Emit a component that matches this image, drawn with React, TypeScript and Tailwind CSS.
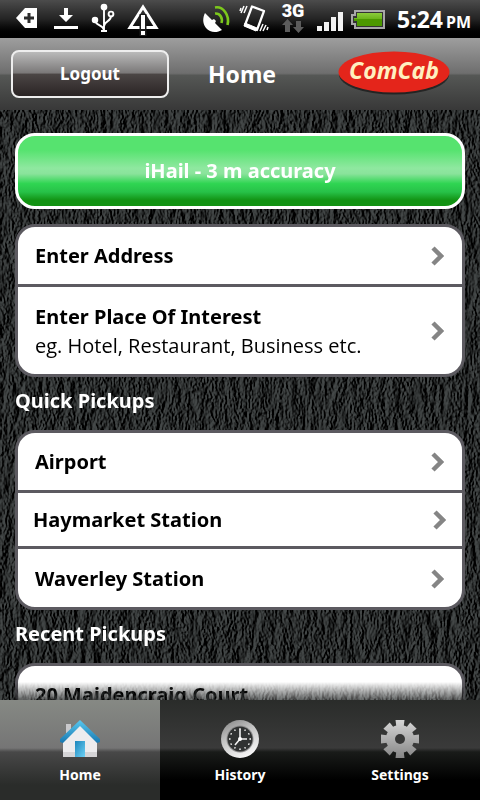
import type { ReactNode } from "react";

function StatusBar() {
  return (
    <div className="flex h-[38px] shrink-0 justify-between bg-linear-to-b from-[#4c4c4c] via-[#242424] via-50% to-black pr-[9px] pl-4 text-white">
      <div className="flex gap-3">
        <svg className="h-[38px] w-[25px]" viewBox="0 0 25 38" aria-hidden="true">
          <path d="M0 18 9 8H21V28H9Z" fill="#fff" />
          <path d="M13 13V23M8 18H18" stroke="#2c2c2c" strokeWidth="3" />
        </svg>
        <svg className="h-[38px] w-[26px]" viewBox="0 0 26 38" aria-hidden="true">
          <path d="M11 8H15V15H20L13 22 6 15H11Z" fill="#fff" />
          <path d="M1 27.5H25" stroke="#fff" strokeWidth="3" />
        </svg>
        <svg className="h-[38px] w-6" viewBox="0 0 24 38" fill="none" stroke="#fff" strokeWidth="1.9" aria-hidden="true">
          <path d="M13 7V31M4 20C4 26 12 24 13 30M20 16C20 22 14 20 13 26" />
          <circle cx="13" cy="7" r="2.4" fill="#fff" />
          <circle cx="4" cy="20" r="2.3" fill="#fff" />
          <circle cx="20" cy="14" r="2.4" />
          <path d="M10 31H16" strokeWidth="2" />
        </svg>
        <svg className="h-[38px] w-8" viewBox="0 0 32 38" aria-hidden="true">
          <path d="M16 7 29 27.5H3Z" fill="none" stroke="#fff" strokeWidth="3" />
          <path d="M16 14V36" stroke="#1b1b1b" strokeWidth="7" />
          <path d="M16 15V29M16 31V35" stroke="#fff" strokeWidth="4" />
        </svg>
      </div>
      <div className="flex gap-2">
        <svg className="h-[38px] w-[30px]" viewBox="0 0 30 38" fill="none" aria-hidden="true">
          <path d="M4 13 11 20 13 19 15 21 14 23 21 30C16 33 9 33 5 28 1 23 2 17 4 13Z" fill="#fff" />
          <path d="M14 7.500C22 6 29 15 26.500 25" stroke="#7cc81c" strokeWidth="2.600" />
          <path d="M14 13.500C19 13 22 18 20.500 23" stroke="#7cc81c" strokeWidth="2.600" />
        </svg>
        <svg className="h-[38px] w-8" viewBox="0 0 32 38" fill="none" stroke="#fff" aria-hidden="true">
          <path d="M13 6.500 25 11 18 30 6 25Z" strokeWidth="2.200" strokeLinejoin="round" />
          <path d="M6 23 18 28 17 31 5 26Z" fill="#fff" strokeWidth="1" />
          <path d="M8 6 5 13M5 6 2 13M2 8 1 11M24 24 21 31M27 25 24 31M29 27 28 30" strokeWidth="1.500" />
        </svg>
        <div className="flex w-7 flex-col items-center pt-[3px]">
          <span className="font-['Roboto'] text-[18px] leading-4 font-black">3G</span>
          <svg className="h-[14px] w-6" viewBox="0 0 24 14" fill="#5c5c5c" aria-hidden="true">
            <path d="M6.500 0 12 6H9V13H4V6H1ZM17.500 14 12 8H15V2H20V8H23Z" />
          </svg>
        </div>
        <svg className="h-[38px] w-7" viewBox="0 0 28 38" fill="#f2f2f2" aria-hidden="true">
          <path d="M2 26H7V31H2ZM9 22H14V31H9ZM16 17H21V31H16ZM23 12H28V31H23Z" />
        </svg>
        <svg className="h-[38px] w-[38px]" viewBox="0 0 38 38" aria-hidden="true">
          <defs>
            <linearGradient id="charge" x2="0" y2="1">
              <stop offset="0" stopColor="#8ccc3c" />
              <stop offset="0.45" stopColor="#6cb41c" />
              <stop offset="0.5" stopColor="#4c9800" />
              <stop offset="1" stopColor="#4c9800" />
            </linearGradient>
          </defs>
          <path d="M4 11H33V28H4V24H1V15H4Z" fill="#333" stroke="#a8a8a8" strokeWidth="2" />
          <path d="M6 13H31V26H6V21H3V18H6Z" fill="url(#charge)" />
        </svg>
        <div className="flex items-baseline gap-[3px] font-bold">
          <span className="text-[23px] leading-[38px]">5:24</span>
          <span className="text-base">PM</span>
        </div>
      </div>
    </div>
  );
}

function Logo() {
  return (
    <svg className="mr-[19px] h-12 w-[112px] justify-self-end" viewBox="0 0 112 48" role="img" aria-label="ComCab">
      <ellipse cx="56" cy="24.500" rx="55" ry="20" fill="#000" opacity="0.5" />
      <ellipse cx="56" cy="22" rx="55.500" ry="20.500" fill="#e4251b" />
      <text
        x="56"
        y="29"
        textAnchor="middle"
        fill="#fff0c0"
        fontSize="23"
        fontWeight="700"
        fontStyle="italic"
        fontFamily="Noto Sans, Open Sans, sans-serif"
      >
        ComCab
      </text>
    </svg>
  );
}

// two layers of noise: long vertical creases and a fine grain over them
function Leather() {
  return (
    <svg className="absolute inset-0 h-full w-full" aria-hidden="true">
      <filter id="leather" x="0" y="0" width="100%" height="100%" colorInterpolationFilters="sRGB">
        <feTurbulence type="turbulence" baseFrequency="0.08 0.026" numOctaves="2" seed="8" result="creases" />
        <feTurbulence type="fractalNoise" baseFrequency="0.6 0.28" numOctaves="3" seed="3" result="grain" />
        <feComposite in="creases" in2="grain" operator="arithmetic" k2="1" k3="0.5" />
        <feColorMatrix values="0 0 0 0 0  0 0 0 0 0  0 0 0 0 0  1 0 0 0 0" />
        <feDiffuseLighting surfaceScale="5" diffuseConstant="0.72" lightingColor="#606666">
          <feDistantLight azimuth="190" elevation="36" />
        </feDiffuseLighting>
      </filter>
      <rect width="100%" height="100%" filter="url(#leather)" />
    </svg>
  );
}

function PickupList({ children }: { children: ReactNode }) {
  return (
    <ul className="divide-y-3 divide-[#5c5a60] overflow-hidden rounded-[20px] border-3 border-[#5c5a60] bg-white">
      {children}
    </ul>
  );
}

const rowPadding = {
  first: "py-[14px] pr-[18px] pl-[17px]",
  middle: "py-3 pr-4 pl-[15px]",
  last: "pt-[15px] pb-[14px] pr-[18px] pl-[17px]",
};

interface PickupRowProps {
  title: string;
  detail?: string;
  place: keyof typeof rowPadding;
  chevron?: boolean;
}

function PickupRow({ title, detail, place, chevron = true }: PickupRowProps) {
  return (
    <li>
      <button className={"flex w-full items-center justify-between text-left text-black " + rowPadding[place]}>
        <span className="text-[20px] leading-[29px]">
          <span className="block font-bold">{title}</span>
          {detail && <span className="block font-['Open_Sans']">{detail}</span>}
        </span>
        {chevron && (
          <svg className="h-5 w-[14px] shrink-0" viewBox="0 0 14 20" fill="none" aria-hidden="true">
            <path d="M3 2 11 10 3 18" stroke="#858585" strokeWidth="4.500" />
          </svg>
        )}
      </button>
    </li>
  );
}

function SectionTitle({ children }: { children: ReactNode }) {
  return <h2 className="pt-[9px] pb-[15px] text-[20px] leading-[29px] font-bold text-white">{children}</h2>;
}

function HomeIcon() {
  return (
    <svg className="h-10 w-[42px]" viewBox="0 0 42 40" aria-hidden="true">
      <defs>
        <linearGradient id="roof" x2="0" y2="1">
          <stop offset="0" stopColor="#58c8f0" />
          <stop offset="1" stopColor="#1878b0" />
        </linearGradient>
        <linearGradient id="door" x2="1" y2="1">
          <stop offset="0" stopColor="#1c86bc" />
          <stop offset="1" stopColor="#6cd0f4" />
        </linearGradient>
      </defs>
      <path d="M7 5H12V14H7Z" fill="#c9c9cc" />
      <path d="M4 20 21 5 38 20V37Q38 38 37 38H5Q4 38 4 37Z" fill="#ececee" />
      <path d="M4 33H38V37Q38 38 37 38H5Q4 38 4 37Z" fill="#d4d4d6" />
      <path d="M21 1 41 20V23L38 24 21 7 4 24 1 23V20Z" fill="url(#roof)" />
      <path d="M16 22H26V38H16Z" fill="url(#door)" />
    </svg>
  );
}

const ticks = [0, 30, 60, 90, 120, 150, 180, 210, 240, 270, 300, 330];

function ClockIcon() {
  return (
    <svg className="h-10 w-10" viewBox="0 0 40 40" aria-hidden="true">
      <defs>
        <linearGradient id="rim" x1="0.200" x2="0.700" y2="1">
          <stop offset="0" stopColor="#8c8c8c" />
          <stop offset="0.400" stopColor="#c4c4c4" />
          <stop offset="1" stopColor="#fafafa" />
        </linearGradient>
      </defs>
      <circle cx="20" cy="20" r="19" fill="url(#rim)" />
      <circle cx="20" cy="20" r="13.500" fill="#8f8f8f" />
      <circle cx="20" cy="20" r="12.500" fill="#303232" />
      {ticks.map((angle) => (
        <circle key={angle} cx="20" cy="9.800" r="0.900" fill="#e0e0e0" transform={`rotate(${angle} 20 20)`} />
      ))}
      <path d="M20 10V20H27M20 20 15 26" fill="none" stroke="#f0f0f0" strokeWidth="1.600" />
      <circle cx="20" cy="20" r="2" fill="#fff" />
    </svg>
  );
}

const teeth = [0, 45, 90, 135, 180, 225, 270, 315];

function GearIcon() {
  return (
    <svg className="h-10 w-10" viewBox="0 0 40 40" aria-hidden="true">
      <defs>
        <linearGradient id="steel" x2="0" y2="1">
          <stop offset="0" stopColor="#d8d8d8" />
          <stop offset="1" stopColor="#848484" />
        </linearGradient>
        <mask id="gear">
          <circle cx="20" cy="20" r="14" fill="#fff" />
          {teeth.map((angle) => (
            <path key={angle} d="M16.500 9 15.500 1H24.500L23.500 9Z" fill="#fff" transform={`rotate(${angle} 20 20)`} />
          ))}
          <circle cx="20" cy="20" r="5" fill="#000" />
        </mask>
      </defs>
      <rect width="40" height="40" fill="url(#steel)" mask="url(#gear)" />
    </svg>
  );
}

function Tab({ label, active, children }: { label: string; active?: boolean; children: ReactNode }) {
  return (
    <button
      aria-current={active ? "page" : undefined}
      className={
        "flex flex-1 flex-col items-center pt-[19px] text-sm leading-8 font-bold text-white " +
        (active
          ? "bg-[linear-gradient(#868984,#757575_48%,#484848_52%,#2a2c2a_85%,#2a2c2a)]"
          : "bg-[linear-gradient(#2a2c2a,#3a3a3a_48%,#191b19_52%,#000_80%)]")
      }
    >
      {children}
      {label}
    </button>
  );
}

export default function App() {
  return (
    <div className="flex h-screen flex-col bg-black font-['Noto_Sans','Open_Sans',sans-serif]">
      <StatusBar />
      <header className="grid h-[72px] shrink-0 grid-cols-[1fr_auto_1fr] items-center bg-[linear-gradient(#9e9e9e,#6e6e6e_49%,#555755_52%,#383838)] px-[11px] text-white">
        <button className="h-12 w-[158px] rounded-lg border-2 border-[#eeeeee] bg-[linear-gradient(#bababa,#7a7878_48%,#4b4645_50%,#2a2424)] text-[17px] font-bold">
          Logout
        </button>
        <h1 className="pl-1 text-[23px] font-bold">Home</h1>
        <Logo />
      </header>

      <main className="relative min-h-0 flex-1 overflow-hidden bg-[#2a2d2d]">
        <Leather />
        <div className="relative h-full overflow-hidden mask-[linear-gradient(#000_calc(100%-18px),rgba(0,0,0,0.2))] px-[15px] pt-[23px]">
          <button className="mb-[15px] h-[76px] w-full rounded-[20px] border-3 border-white bg-[linear-gradient(#56e36f_20%,#8fe8a0_46%,#8ae39b_54%,#2fd552_68%,#27c148_80%,#129212_92%,#129212)] text-[20px] font-bold text-white">
            iHail - 3 m accuracy
          </button>
          <PickupList>
            <PickupRow title="Enter Address" place="first" />
            <PickupRow title="Enter Place Of Interest" detail="eg. Hotel, Restaurant, Business etc." place="last" />
          </PickupList>
          <SectionTitle>Quick Pickups</SectionTitle>
          <PickupList>
            <PickupRow title="Airport" place="first" />
            <PickupRow title="Haymarket Station" place="middle" />
            <PickupRow title="Waverley Station" place="last" />
          </PickupList>
          <SectionTitle>Recent Pickups</SectionTitle>
          <PickupList>
            <PickupRow title="20 Maidencraig Court" place="first" chevron={false} />
          </PickupList>
        </div>
      </main>

      <nav className="flex h-[100px] shrink-0">
        <Tab label="Home" active>
          <HomeIcon />
        </Tab>
        <Tab label="History">
          <ClockIcon />
        </Tab>
        <Tab label="Settings">
          <GearIcon />
        </Tab>
      </nav>
    </div>
  );
}
